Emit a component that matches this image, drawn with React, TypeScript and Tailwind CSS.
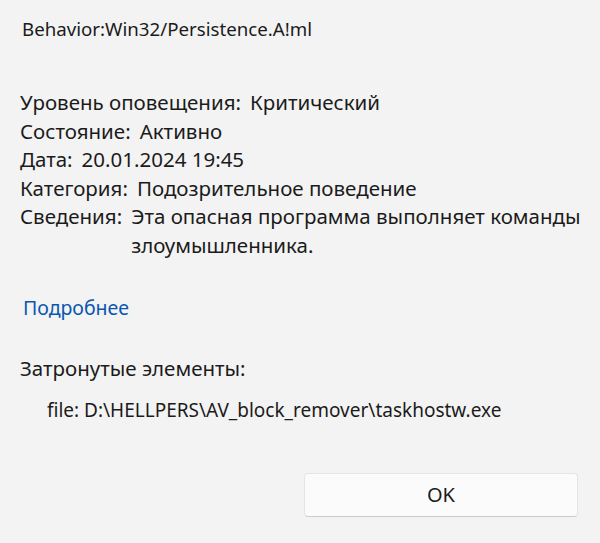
import React from 'react';

const rows: { label: string; value: string }[] = [
  { label: 'Уровень оповещения:', value: 'Критический' },
  { label: 'Состояние:', value: 'Активно' },
  { label: 'Дата:', value: '20.01.2024 19:45' },
  { label: 'Категория:', value: 'Подозрительное поведение' },
  { label: 'Сведения:', value: 'Эта опасная программа выполняет команды злоумышленника.' },
];

export default function App() {
  return (
    <div
      className="w-[600px] h-[543px] bg-[#f3f3f3] text-[#1b1b1b] flex flex-col overflow-hidden"
      style={{ fontFamily: '"Noto Sans", "Open Sans", sans-serif' }}
    >
      <div className="pl-[22px] pt-[16px] text-[18.7px] leading-[26px]">Behavior:Win32/Persistence.A!ml</div>

      <div className="pl-[20px] pr-[8px] mt-[46px] flex flex-col text-[20.5px] leading-[28.5px]">
        {rows.map((r) => (
          <div key={r.label} className="flex gap-[9px]">
            <span className="shrink-0">{r.label}</span>
            <span>{r.value}</span>
          </div>
        ))}
      </div>

      <a href="#" className="ml-[23px] mt-[35px] text-[19.5px] leading-[28px] text-[#0a57b0] w-fit">
        Подробнее
      </a>

      <div className="pl-[20px] mt-[32px] text-[20.5px] leading-[28px]">Затронутые элементы:</div>

      <div className="pl-[47px] mt-[14px] text-[19px] leading-[28px]">
        file: D:\HELLPERS\AV_block_remover\taskhostw.exe
      </div>

      <div className="flex justify-end pr-[22px] mt-[49px]">
        <button className="w-[274px] h-[44px] bg-[#fbfbfb] border border-[#e5e5e5] border-b-[#cccccc] rounded-[4px] text-[20px] text-[#1b1b1b]">
          OK
        </button>
      </div>
    </div>
  );
}
